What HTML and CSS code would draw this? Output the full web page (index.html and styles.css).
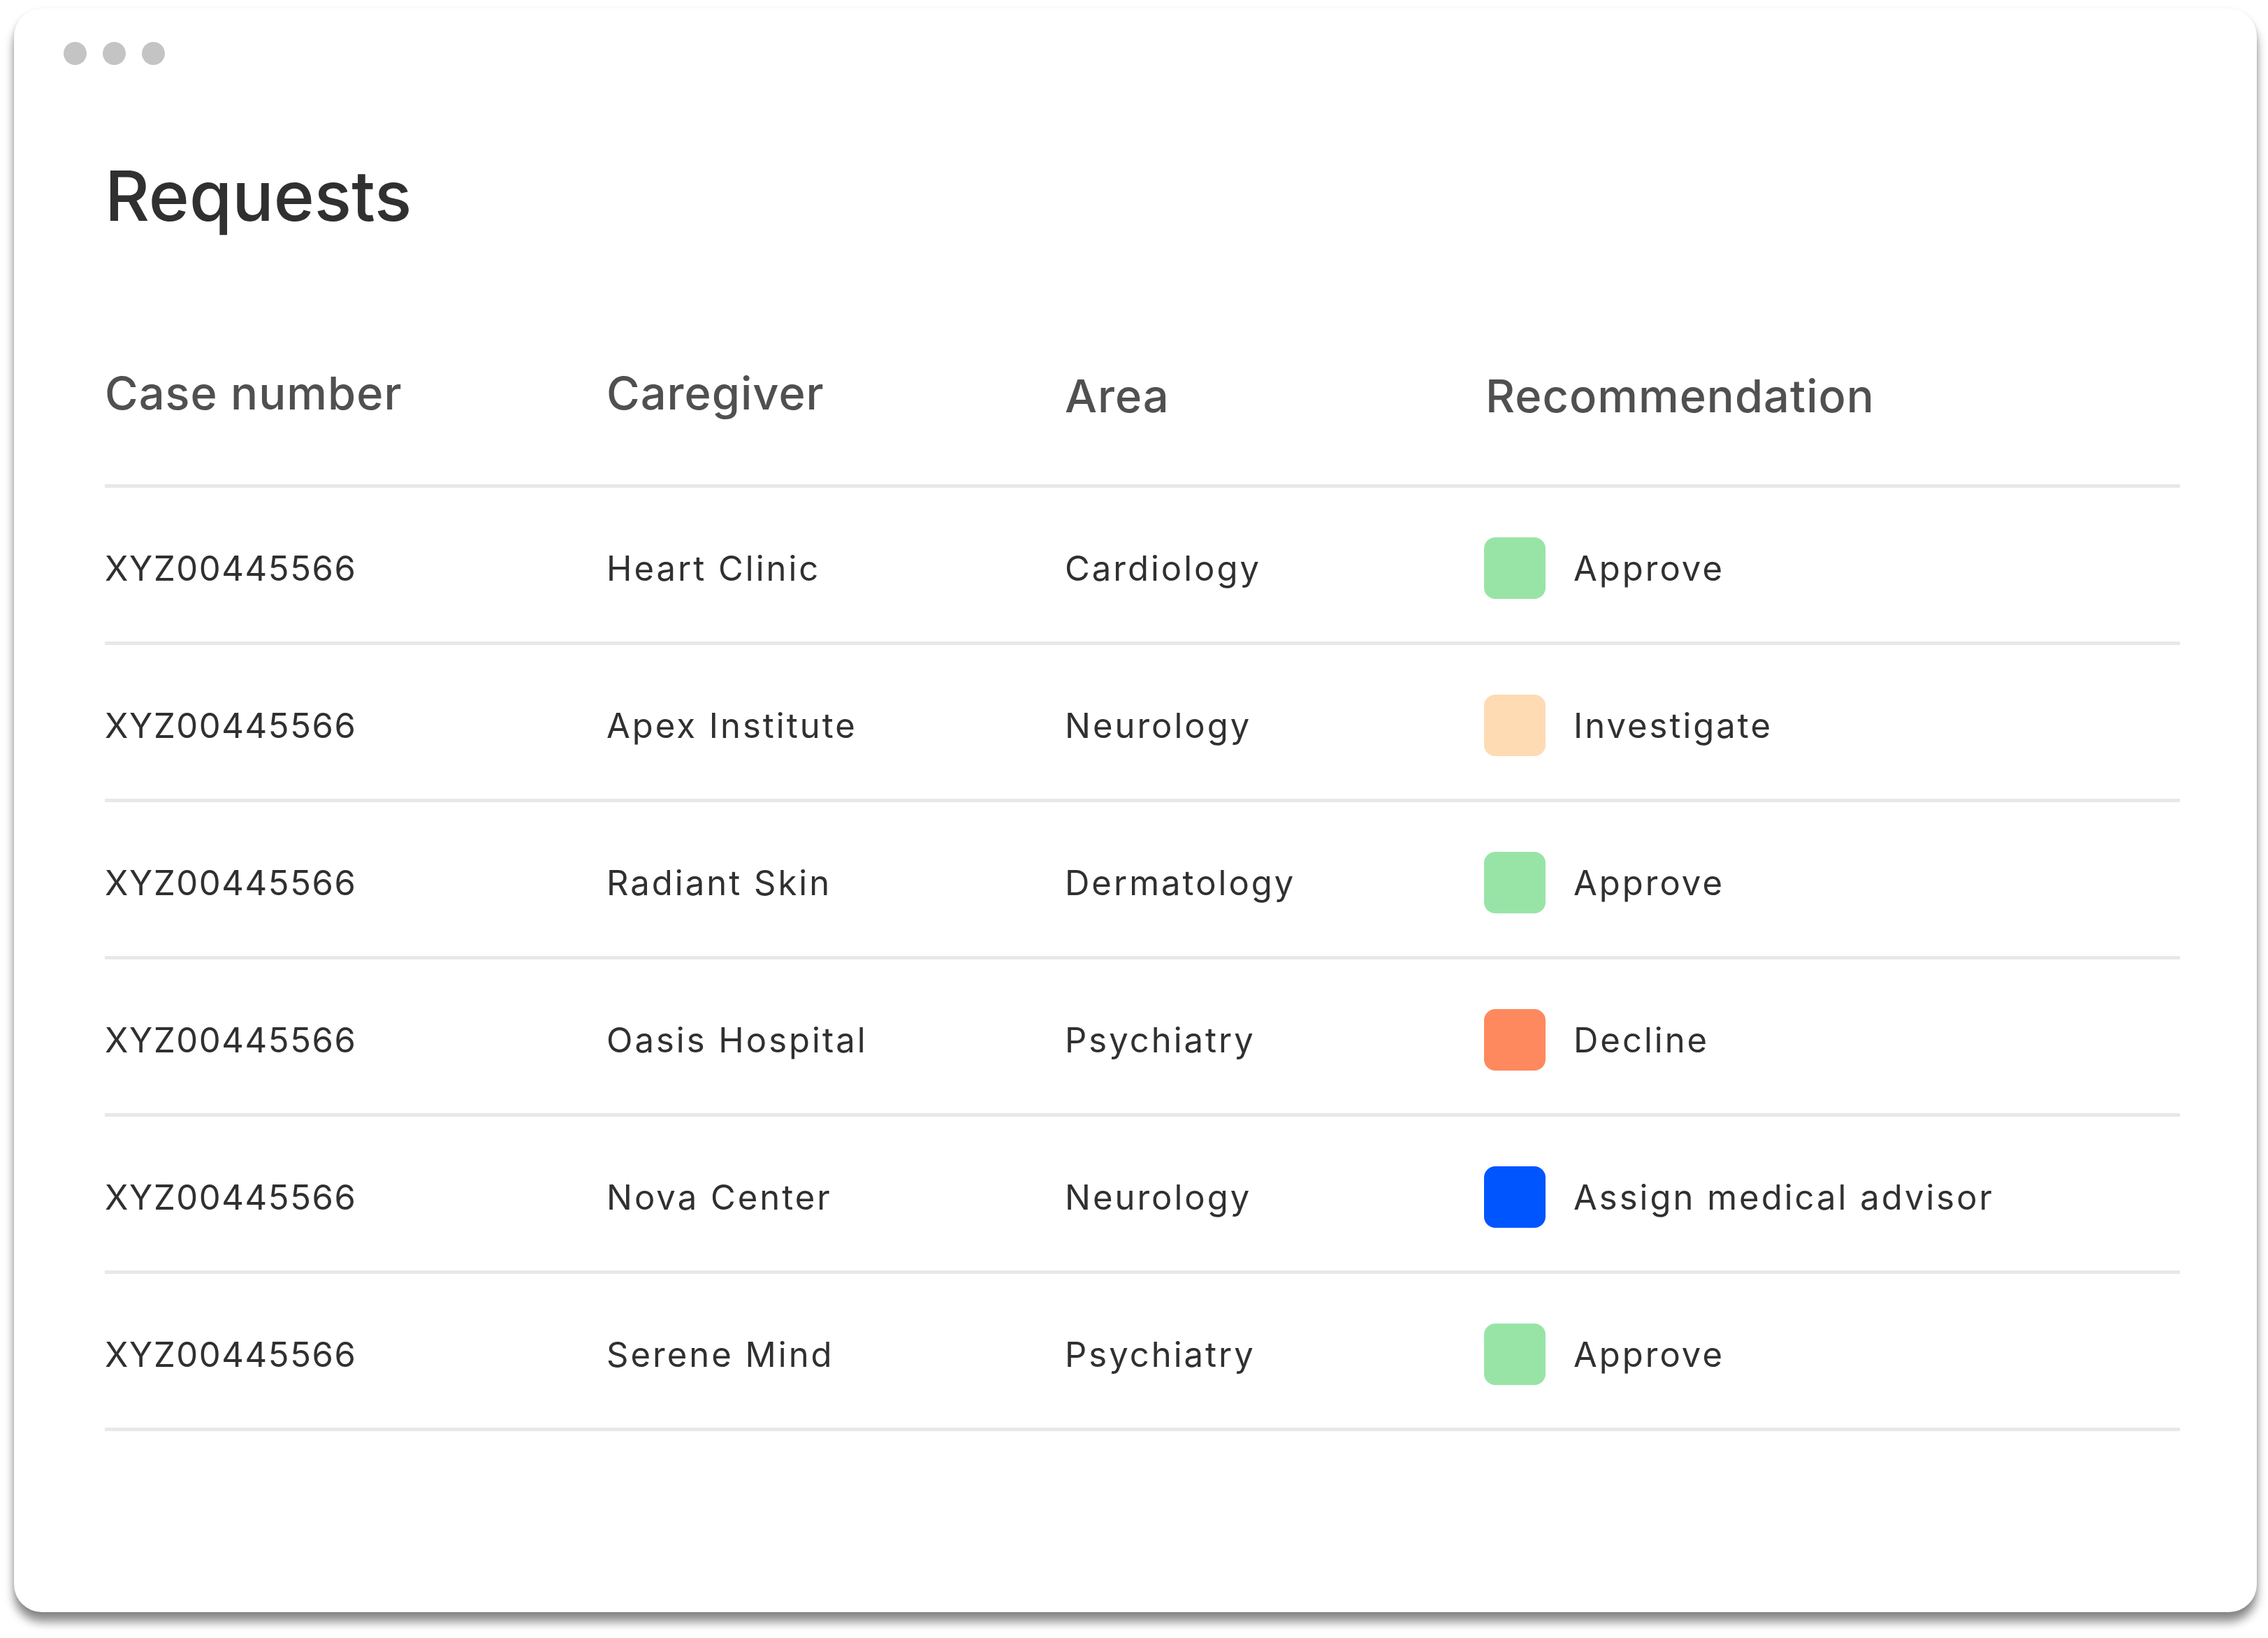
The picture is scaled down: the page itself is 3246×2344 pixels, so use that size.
FILE: index.html
```html
<!DOCTYPE html>
<html lang="en">
<head>
<meta charset="utf-8">
<title>Requests</title>
<link rel="stylesheet" href="styles.css">
</head>
<body>
<div class="window">
  <div class="dots"><span class="dot"></span><span class="dot"></span><span class="dot"></span></div>
  <h1 class="title">Requests</h1>
  <div class="table">
    <div class="row head">
      <div class="cell">Case number</div>
      <div class="cell">Caregiver</div>
      <div class="cell low">Area</div>
      <div class="cell low">Recommendation</div>
    </div>
    <div class="row">
      <div class="cell case">XYZ00445566</div>
      <div class="cell">Heart Clinic</div>
      <div class="cell">Cardiology</div>
      <div class="cell rec"><span class="swatch approve"></span>Approve</div>
    </div>
    <div class="row">
      <div class="cell case">XYZ00445566</div>
      <div class="cell">Apex Institute</div>
      <div class="cell">Neurology</div>
      <div class="cell rec"><span class="swatch investigate"></span>Investigate</div>
    </div>
    <div class="row">
      <div class="cell case">XYZ00445566</div>
      <div class="cell">Radiant Skin</div>
      <div class="cell">Dermatology</div>
      <div class="cell rec"><span class="swatch approve"></span>Approve</div>
    </div>
    <div class="row">
      <div class="cell case">XYZ00445566</div>
      <div class="cell">Oasis Hospital</div>
      <div class="cell">Psychiatry</div>
      <div class="cell rec"><span class="swatch decline"></span>Decline</div>
    </div>
    <div class="row">
      <div class="cell case">XYZ00445566</div>
      <div class="cell">Nova Center</div>
      <div class="cell">Neurology</div>
      <div class="cell rec"><span class="swatch advisor"></span>Assign medical advisor</div>
    </div>
    <div class="row">
      <div class="cell case">XYZ00445566</div>
      <div class="cell">Serene Mind</div>
      <div class="cell">Psychiatry</div>
      <div class="cell rec"><span class="swatch approve"></span>Approve</div>
    </div>
  </div>
</div>
</body>
</html>
```
FILE: styles.css
```css
html, body {
  margin: 0;
  padding: 0;
  background: #ffffff;
}
body {
  padding: 12px 16px 37px 20px;
  font-family: Inter, "Noto Sans", sans-serif;
  color: #303030;
}
.window {
  width: 3210px;
  box-sizing: border-box;
  background: #ffffff;
  border-radius: 40px;
  padding: 48px 110px 259px 130px;
  box-shadow: 0 14px 14px rgba(0, 0, 0, 0.45), 0 2px 6px rgba(0, 0, 0, 0.1);
}
.dots {
  display: flex;
  gap: 23px;
  margin-left: -59px;
}
.dot {
  width: 33px;
  height: 33px;
  border-radius: 50%;
  background: #c4c4c4;
}
.title {
  margin: 138px 0 0 0;
  font-size: 99px;
  line-height: 1;
  font-weight: 500;
  letter-spacing: 0;
  color: #303030;
}
.table {
  margin-top: 200px;
}
.row {
  display: grid;
  grid-template-columns: 718px 656px 602px 1fr;
  align-items: center;
  height: 210px;
  padding-top: 10px;
  border-bottom: 5px solid #e8e8e8;
  font-size: 49px;
  letter-spacing: 3px;
  color: #303030;
}
.row.head {
  height: auto;
  padding-top: 0;
  align-items: start;
  line-height: 1;
  padding-bottom: 94px;
  font-size: 65px;
  font-weight: 500;
  letter-spacing: 1px;
  color: #505050;
}
.cell.low {
  padding-top: 4px;
}
.cell.case {
  letter-spacing: 1.6px;
}
.rec {
  display: flex;
  align-items: center;
  gap: 40px;
  margin-left: -2px;
}
.swatch {
  width: 88px;
  height: 88px;
  border-radius: 16px;
  flex: none;
}
.approve { background: #98e4a7; }
.investigate { background: #fedbb3; }
.decline { background: #ff895e; }
.advisor { background: #0055ff; }
```
